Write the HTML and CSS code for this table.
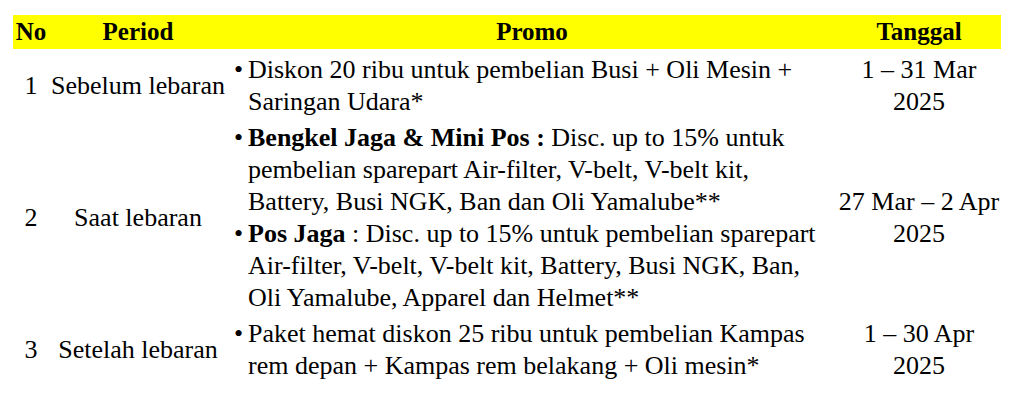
FILE: index.html
```html
<!DOCTYPE html>
<html>
<head>
<meta charset="utf-8">
<link rel="stylesheet" href="styles.css">
</head>
<body>
<div class="page">
<table class="promo-table">
  <colgroup>
    <col class="c-no">
    <col class="c-period">
    <col class="c-promo">
    <col class="c-date">
  </colgroup>
  <thead>
    <tr class="head">
      <th>No</th>
      <th>Period</th>
      <th>Promo</th>
      <th>Tanggal</th>
    </tr>
  </thead>
  <tbody>
    <tr class="r1">
      <td class="no">1</td>
      <td class="period">Sebelum lebaran</td>
      <td class="promo">
        <div class="item"><span class="dot">•</span><span class="txt">Diskon 20 ribu untuk pembelian Busi + Oli Mesin +<br>Saringan Udara*</span></div>
      </td>
      <td class="date">1 – 31 Mar<br>2025</td>
    </tr>
    <tr class="r2">
      <td class="no">2</td>
      <td class="period">Saat lebaran</td>
      <td class="promo">
        <div class="item"><span class="dot">•</span><span class="txt"><b>Bengkel Jaga &amp; Mini Pos :</b> Disc. up to 15% untuk<br>pembelian sparepart Air-filter, V-belt, V-belt kit,<br>Battery, Busi NGK, Ban dan Oli Yamalube**</span></div>
        <div class="item"><span class="dot">•</span><span class="txt"><b>Pos Jaga</b> : Disc. up to 15% untuk pembelian sparepart<br>Air-filter, V-belt, V-belt kit, Battery, Busi NGK, Ban,<br>Oli Yamalube, Apparel dan Helmet**</span></div>
      </td>
      <td class="date">27 Mar – 2 Apr<br>2025</td>
    </tr>
    <tr class="r3">
      <td class="no">3</td>
      <td class="period">Setelah lebaran</td>
      <td class="promo">
        <div class="item"><span class="dot">•</span><span class="txt">Paket hemat diskon 25 ribu untuk pembelian Kampas<br>rem depan + Kampas rem belakang + Oli mesin*</span></div>
      </td>
      <td class="date">1 – 30 Apr<br>2025</td>
    </tr>
  </tbody>
</table>
</div>
</body>
</html>
```

FILE: styles.css
```css
html, body {
  margin: 0;
  padding: 0;
  background: #ffffff;
}

.page {
  padding: 15px 0 0 13px;
  color: #000;
}

.promo-table {
  border-collapse: collapse;
  table-layout: fixed;
  width: 988px;
}

.promo-table th,
.promo-table td {
  font-family: "Liberation Serif", "Times New Roman", serif;
  color: #000;
}

.c-no { width: 36px; }
.c-period { width: 178px; }
.c-promo { width: 610px; }
.c-date { width: 164px; }

.head th {
  background: #ffff00;
  font-size: 25px;
  font-weight: bold;
  line-height: 34px;
  height: 34px;
  padding: 0;
  text-align: center;
}

.promo-table td {
  font-size: 26px;
  line-height: 32px;
  vertical-align: middle;
  padding: 2px 0;
}

.promo-table td.no,
.promo-table td.period,
.promo-table td.date {
  text-align: center;
}

.promo-table td.promo {
  padding-left: 7px;
}

.item {
  display: flex;
  align-items: flex-start;
}

.dot {
  flex: 0 0 14px;
}

.txt {
  flex: 1;
  white-space: nowrap;
}

.promo-table .r1 td {
  padding-top: 5px;
}
```
